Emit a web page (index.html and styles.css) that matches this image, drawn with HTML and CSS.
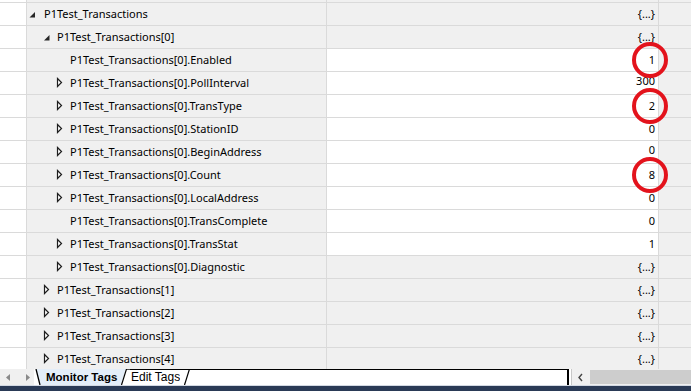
FILE: index.html
```html
<!DOCTYPE html>
<html>
<head>
<meta charset="utf-8">
<link rel="stylesheet" href="styles.css">
</head>
<body>
<div class="app">
  <div class="grid">
    <div class="row top-stub">
      <div class="gutter"></div><div class="name"></div><div class="value"></div><div class="rest"></div>
    </div>

    <div class="row">
      <div class="gutter"></div>
      <div class="name l0"><svg class="arr" viewBox="0 0 13 22"><polygon points="4,9 4,14.5 -1.5,14.5" fill="#262626"/></svg><span>P1Test_Transactions</span></div>
      <div class="value"><span>{...}</span></div><div class="rest"></div>
    </div>

    <div class="row">
      <div class="gutter"></div>
      <div class="name l1"><svg class="arr" viewBox="0 0 13 22"><polygon points="5.5,9 5.5,14.5 0,14.5" fill="#262626"/></svg><span>P1Test_Transactions[0]</span></div>
      <div class="value"><span>{...}</span></div><div class="rest"></div>
    </div>

    <div class="row">
      <div class="gutter"></div>
      <div class="name l2"><span class="noarr"></span><span>P1Test_Transactions[0].Enabled</span></div>
      <div class="value edit"><span>1</span><svg class="mark" viewBox="0 0 36 36"><circle cx="18" cy="18" r="16" fill="none" stroke="#e3131c" stroke-width="4"/></svg></div><div class="rest"></div>
    </div>

    <div class="row">
      <div class="gutter"></div>
      <div class="name l2"><svg class="arr" viewBox="0 0 13 22"><polygon points="0.5,6.5 4.5,10.5 0.5,14.5" fill="#fff" stroke="#1e1e1e" stroke-width="1.2"/></svg><span>P1Test_Transactions[0].PollInterval</span></div>
      <div class="value edit"><span class="lift">300</span></div><div class="rest"></div>
    </div>

    <div class="row">
      <div class="gutter"></div>
      <div class="name l2"><svg class="arr" viewBox="0 0 13 22"><polygon points="0.5,6.5 4.5,10.5 0.5,14.5" fill="#fff" stroke="#1e1e1e" stroke-width="1.2"/></svg><span>P1Test_Transactions[0].TransType</span></div>
      <div class="value edit"><span>2</span><svg class="mark" viewBox="0 0 36 36"><circle cx="18" cy="18" r="16" fill="none" stroke="#e3131c" stroke-width="4"/></svg></div><div class="rest"></div>
    </div>

    <div class="row">
      <div class="gutter"></div>
      <div class="name l2"><svg class="arr" viewBox="0 0 13 22"><polygon points="0.5,6.5 4.5,10.5 0.5,14.5" fill="#fff" stroke="#1e1e1e" stroke-width="1.2"/></svg><span>P1Test_Transactions[0].StationID</span></div>
      <div class="value edit"><span>0</span></div><div class="rest"></div>
    </div>

    <div class="row">
      <div class="gutter"></div>
      <div class="name l2"><svg class="arr" viewBox="0 0 13 22"><polygon points="0.5,6.5 4.5,10.5 0.5,14.5" fill="#fff" stroke="#1e1e1e" stroke-width="1.2"/></svg><span>P1Test_Transactions[0].BeginAddress</span></div>
      <div class="value edit"><span class="lift">0</span></div><div class="rest"></div>
    </div>

    <div class="row">
      <div class="gutter"></div>
      <div class="name l2"><svg class="arr" viewBox="0 0 13 22"><polygon points="0.5,6.5 4.5,10.5 0.5,14.5" fill="#fff" stroke="#1e1e1e" stroke-width="1.2"/></svg><span>P1Test_Transactions[0].Count</span></div>
      <div class="value edit"><span>8</span><svg class="mark" viewBox="0 0 36 36"><circle cx="18" cy="18" r="16" fill="none" stroke="#e3131c" stroke-width="4"/></svg></div><div class="rest"></div>
    </div>

    <div class="row">
      <div class="gutter"></div>
      <div class="name l2"><svg class="arr" viewBox="0 0 13 22"><polygon points="0.5,6.5 4.5,10.5 0.5,14.5" fill="#fff" stroke="#1e1e1e" stroke-width="1.2"/></svg><span>P1Test_Transactions[0].LocalAddress</span></div>
      <div class="value edit"><span>0</span></div><div class="rest"></div>
    </div>

    <div class="row">
      <div class="gutter"></div>
      <div class="name l2"><span class="noarr"></span><span>P1Test_Transactions[0].TransComplete</span></div>
      <div class="value edit"><span>0</span></div><div class="rest"></div>
    </div>

    <div class="row">
      <div class="gutter"></div>
      <div class="name l2"><svg class="arr" viewBox="0 0 13 22"><polygon points="0.5,6.5 4.5,10.5 0.5,14.5" fill="#fff" stroke="#1e1e1e" stroke-width="1.2"/></svg><span>P1Test_Transactions[0].TransStat</span></div>
      <div class="value edit"><span>1</span></div><div class="rest"></div>
    </div>

    <div class="row">
      <div class="gutter"></div>
      <div class="name l2"><svg class="arr" viewBox="0 0 13 22"><polygon points="0.5,6.5 4.5,10.5 0.5,14.5" fill="#fff" stroke="#1e1e1e" stroke-width="1.2"/></svg><span>P1Test_Transactions[0].Diagnostic</span></div>
      <div class="value"><span>{...}</span></div><div class="rest"></div>
    </div>

    <div class="row">
      <div class="gutter"></div>
      <div class="name l1"><svg class="arr" viewBox="0 0 13 22"><polygon points="0.5,6.5 4.5,10.5 0.5,14.5" fill="#fff" stroke="#1e1e1e" stroke-width="1.2"/></svg><span>P1Test_Transactions[1]</span></div>
      <div class="value"><span>{...}</span></div><div class="rest"></div>
    </div>

    <div class="row">
      <div class="gutter"></div>
      <div class="name l1"><svg class="arr" viewBox="0 0 13 22"><polygon points="0.5,6.5 4.5,10.5 0.5,14.5" fill="#fff" stroke="#1e1e1e" stroke-width="1.2"/></svg><span>P1Test_Transactions[2]</span></div>
      <div class="value"><span>{...}</span></div><div class="rest"></div>
    </div>

    <div class="row">
      <div class="gutter"></div>
      <div class="name l1"><svg class="arr" viewBox="0 0 13 22"><polygon points="0.5,6.5 4.5,10.5 0.5,14.5" fill="#fff" stroke="#1e1e1e" stroke-width="1.2"/></svg><span>P1Test_Transactions[3]</span></div>
      <div class="value"><span>{...}</span></div><div class="rest"></div>
    </div>

    <div class="row">
      <div class="gutter"></div>
      <div class="name l1"><svg class="arr" viewBox="0 0 13 22"><polygon points="0.5,6.5 4.5,10.5 0.5,14.5" fill="#fff" stroke="#1e1e1e" stroke-width="1.2"/></svg><span>P1Test_Transactions[4]</span></div>
      <div class="value"><span>{...}</span></div><div class="rest"></div>
    </div>
  </div>

  <div class="tabbar">
    <div class="nav">
      <div class="navbtn"><svg viewBox="0 0 16 16" width="16" height="16"><polygon points="9,5 9,12 5,8.5" fill="#8a8a8a"/></svg></div>
      <div class="navbtn"><svg viewBox="0 0 16 16" width="16" height="16"><polygon points="8,5 8,12 12,8.5" fill="#8a8a8a"/></svg></div>
    </div>
    <svg class="slant" width="8" height="16" viewBox="0 0 8 16"><polygon points="2,0 8,0 8,16 6,16" fill="#e4eef9"/><line x1="2" y1="0" x2="6" y2="16" stroke="#000" stroke-width="1.3"/></svg>
    <div class="tab active">Monitor Tags</div>
    <svg class="slant" width="10" height="16" viewBox="0 0 10 16"><polygon points="0,0 6,0 1,16 0,16" fill="#e4eef9"/><polygon points="6,0 10,0 10,16 1,16" fill="#fff"/><line x1="0" y1="0.5" x2="10" y2="0.5" stroke="#000" stroke-width="1" transform="translate(6 0) scale(0.4 1)"/><line x1="6.5" y1="0" x2="1.5" y2="16" stroke="#000" stroke-width="1.2"/></svg>
    <div class="tab">Edit Tags</div>
    <svg class="slant" width="12" height="16" viewBox="0 0 12 16"><polygon points="0,0 9,0 4,16 0,16" fill="#fff"/><polygon points="9,0 12,0 12,16 4,16" fill="#fff"/><line x1="0" y1="0.5" x2="12" y2="0.5" stroke="#000" stroke-width="1"/><line x1="9.5" y1="0" x2="4.5" y2="16" stroke="#000" stroke-width="1.2"/></svg>
    <div class="tabfill"></div>
    <div class="hscroll">
      <div class="sbtn"><svg viewBox="0 0 16 16" width="16" height="16"><polyline points="9,5 6,8.5 9,12" fill="none" stroke="#444" stroke-width="1.4"/></svg></div>
      <div class="track"></div>
    </div>
  </div>
  <div class="sep"></div>
  <div class="taskbar"></div>
</div>
</body>
</html>
```

FILE: styles.css
```css
html, body {
  margin: 0;
  padding: 0;
  overflow: hidden;
  background: #f0f0f0;
}

.app {
  width: 691px;
  height: 391px;
  display: flex;
  flex-direction: column;
  font-family: "Noto Sans", "Open Sans", sans-serif;
  font-size: 11px;
  color: #000;
}

.grid {
  height: 369px;
  overflow: hidden;
  flex: none;
}

.row {
  display: flex;
  height: 23px;
  box-sizing: border-box;
  border-bottom: 1px solid #dadada;
  line-height: 22px;
}

.top-stub {
  margin-top: -20px;
}

.gutter {
  width: 27px;
  flex: none;
  box-sizing: border-box;
  border-right: 1px solid #dadada;
  background: #fff;
}

.name {
  width: 300px;
  flex: none;
  box-sizing: border-box;
  border-right: 1px solid #dadada;
  background: #f0f0f0;
  display: flex;
  align-items: center;
  white-space: nowrap;
  overflow: hidden;
}

.l0 { padding-left: 4px; }
.l1 { padding-left: 17px; }
.l2 { padding-left: 30px; }

.arr {
  width: 13px;
  height: 22px;
  flex: none;
  overflow: visible;
}

.noarr {
  width: 13px;
  flex: none;
}

.value {
  width: 332px;
  flex: none;
  box-sizing: border-box;
  border-right: 1px solid #dadada;
  background: #f0f0f0;
  display: flex;
  justify-content: flex-end;
  padding-right: 3px;
  position: relative;
}

.value.edit {
  background: #fff;
}

.lift {
  position: relative;
  top: -2px;
}

.mark {
  position: absolute;
  left: 305px;
  top: -7px;
  width: 36px;
  height: 36px;
  z-index: 2;
  overflow: visible;
}

.rest {
  flex: 1;
  background: #f0f0f0;
}

.tabbar {
  height: 16px;
  flex: none;
  display: flex;
  background: #fff;
  font-family: "Liberation Sans", Arial, sans-serif;
  font-size: 12px;
  line-height: 16px;
}

.nav {
  width: 34px;
  display: flex;
  background: #f0f0f0;
  flex: none;
}

.navbtn {
  width: 17px;
  height: 16px;
  display: flex;
  align-items: center;
  justify-content: center;
}

.slant {
  flex: none;
  display: block;
}

.tab {
  flex: none;
  box-sizing: border-box;
  height: 16px;
  background: #fff;
  border-top: 1px solid #000;
  line-height: 15px;
  padding-left: 1px;
}

.tab.active {
  background: #e4eef9;
  border-top: none;
  font-weight: bold;
  font-size: 11.5px;
  line-height: 16px;
  padding-left: 4px;
  padding-right: 0;
  width: 78px;
}

.tabfill {
  flex: 1;
  box-sizing: border-box;
  border-top: 1px solid #000;
  border-right: 2px solid #000;
  background: #fff;
}

.hscroll {
  width: 120px;
  flex: none;
  display: flex;
  background: #f0f0f0;
  box-sizing: border-box;
  border-left: 1px solid #c8c8c8;
  margin-left: 2px;
}

.sbtn {
  width: 17px;
  display: flex;
  align-items: center;
  justify-content: center;
}

.track {
  flex: 1;
  background: #cdcdcd;
  margin: 1px 0 1px 1px;
}

.sep {
  height: 1px;
  background: #d3d9e3;
  flex: none;
}

.taskbar {
  flex: 1;
  background: #2a3a56;
}
```
